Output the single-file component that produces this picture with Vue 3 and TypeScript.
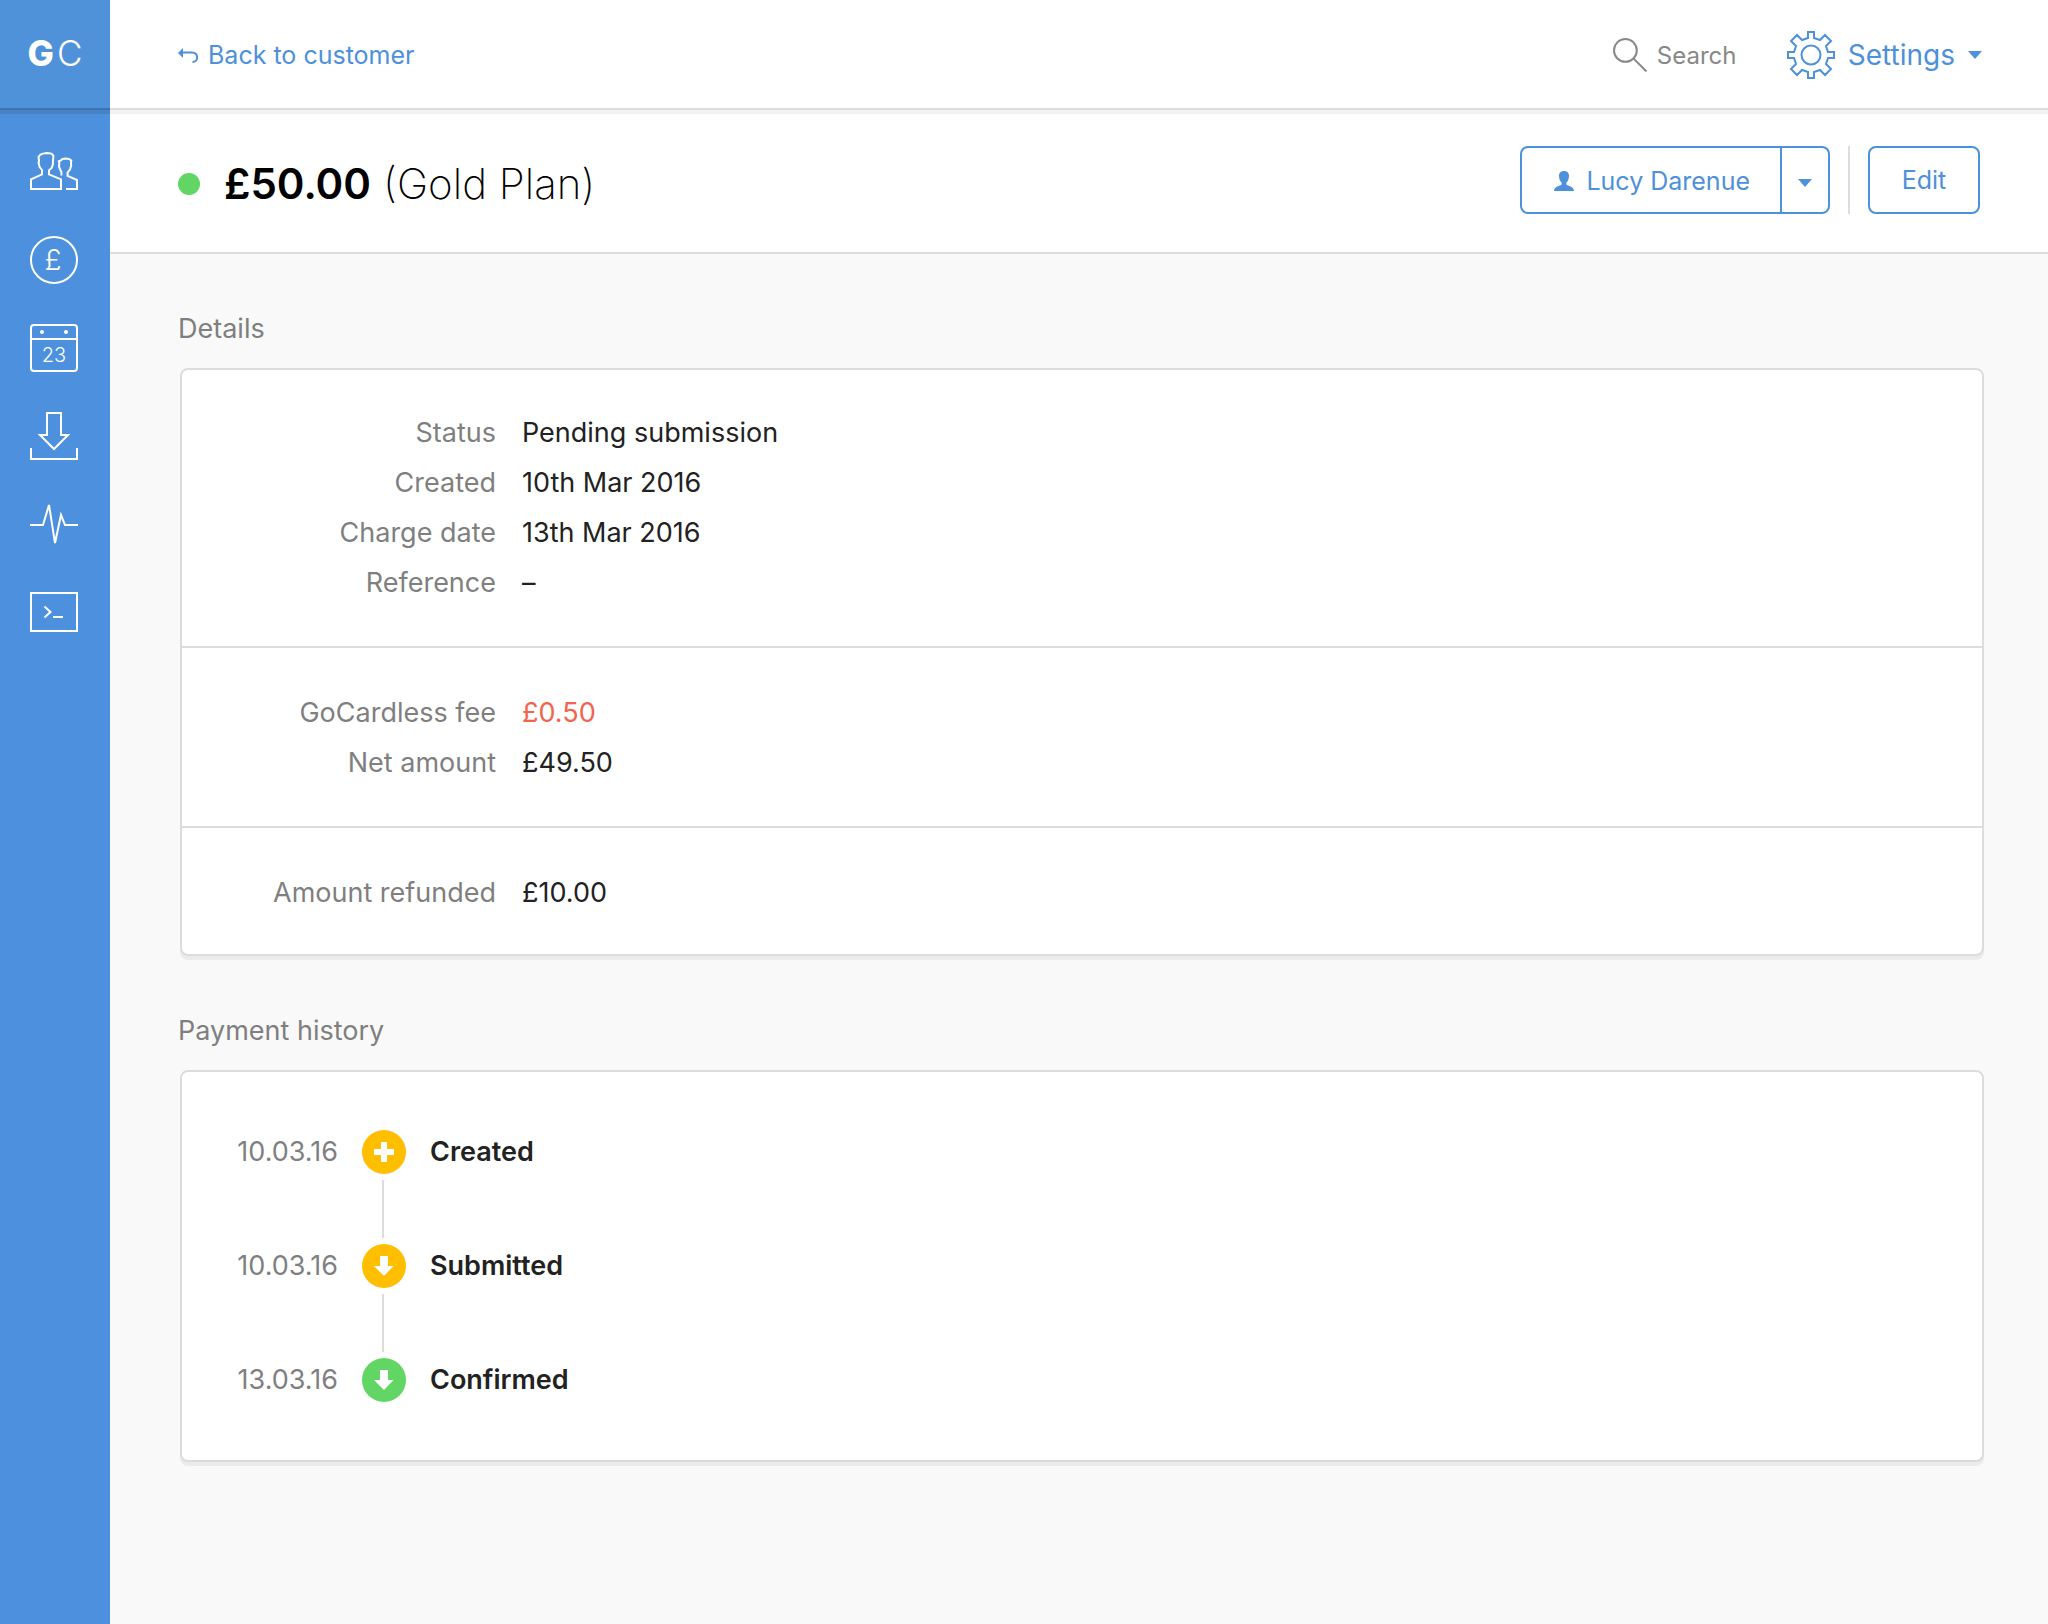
<script setup lang="ts">
interface DetailRow {
  label: string
  value: string
  negative?: boolean
}

interface HistoryEvent {
  date: string
  title: string
  icon: 'plus' | 'arrow'
  tone: 'pending' | 'success'
}

const detailGroups: DetailRow[][] = [
  [
    { label: 'Status', value: 'Pending submission' },
    { label: 'Created', value: '10th Mar 2016' },
    { label: 'Charge date', value: '13th Mar 2016' },
    { label: 'Reference', value: '–' },
  ],
  [
    { label: 'GoCardless fee', value: '£0.50', negative: true },
    { label: 'Net amount', value: '£49.50' },
  ],
  [{ label: 'Amount refunded', value: '£10.00' }],
]

const history: HistoryEvent[] = [
  { date: '10.03.16', title: 'Created', icon: 'plus', tone: 'pending' },
  { date: '10.03.16', title: 'Submitted', icon: 'arrow', tone: 'pending' },
  { date: '13.03.16', title: 'Confirmed', icon: 'arrow', tone: 'success' },
]
</script>

<template>
  <div class="shell">
    <aside class="sidebar">
      <a class="logo" href="#" aria-label="GoCardless home"><b>G</b><span>C</span></a>
      <nav class="nav" aria-label="Main">
        <a href="#" aria-label="Customers">
          <svg class="nav-icon" viewBox="0 0 48 48">
            <path d="M1 41V31.3L12 26.3V22L9.6 19L8.6 15L9 12.5L8.5 9L10.5 6.5L13 5.6L17 5L21.5 5.6L23.4 7.6L23.2 11L22.8 14L23 16L21.8 19.6L19 22.4V26.3L31 31.3V41Z" />
            <path d="M36 41H47V32L37.6 27.8V24.5L40 21.5L41.2 17.5L41 15L41.3 12.4L39 10.9L35.6 10.6L32.5 11L30.5 12.6L28.8 13.2L29.3 15.5L29 18.5L30.4 22L31.4 24V27.5" />
          </svg>
        </a>
        <a href="#" aria-label="Payments">
          <svg class="nav-icon" viewBox="0 0 48 48">
            <circle cx="24" cy="24" r="23" />
            <text class="pound" x="23" y="34">£</text>
          </svg>
        </a>
        <a href="#" aria-label="Plans">
          <svg class="nav-icon" viewBox="0 0 48 48">
            <rect x="1" y="1" width="46" height="46" rx="3" />
            <path d="M1 15H47" />
            <circle class="dot" cx="12" cy="8" r="2" />
            <circle class="dot" cx="36" cy="8" r="2" />
            <text class="day" x="24" y="38">23</text>
          </svg>
        </a>
        <a href="#" aria-label="Payouts">
          <svg class="nav-icon" viewBox="0 0 48 48">
            <path d="M17 1H31V23H38L24 37L10 23H17Z" />
            <path d="M1 36V47H47V36" />
          </svg>
        </a>
        <a href="#" aria-label="Events">
          <svg class="nav-icon" viewBox="0 0 48 48">
            <path d="M0 25H13L19 5L25 43L31 15L35 25H48" />
          </svg>
        </a>
        <a href="#" aria-label="Developers">
          <svg class="nav-icon" viewBox="0 0 48 48">
            <rect x="1" y="5" width="46" height="38" />
            <path d="M14.5 18.5L20.5 24L14.5 29.5M23 29H33" />
          </svg>
        </a>
      </nav>
    </aside>

    <div class="page">
      <header class="topbar">
        <a class="back" href="#">
          <svg width="20" height="18" viewBox="0 0 20 18">
            <path class="fill" d="M0 7L5 2V12Z" />
            <path class="line" d="M4 6.5H14C21 7 20.500 16 14.500 16" />
          </svg>
          Back to customer
        </a>
        <div class="tools">
          <label class="search">
            <svg width="34" height="34" viewBox="0 0 34 34">
              <circle cx="12.400" cy="12.400" r="11.400" />
              <path d="M20.600 20.600L33.400 33.400" />
            </svg>
            <input type="text" placeholder="Search" aria-label="Search" />
          </label>
          <button class="settings" type="button">
            <svg class="gear" width="48" height="48" viewBox="0 0 48 48">
              <path d="M21 1H27V7L33 9L38 4L44 10L39 15L41 21H47V27H41L39 33L44 38L38 44L33 39L27 41V47H21V41L15 39L10 44L4 38L9 33L7 27H1V21H7L9 15L4 10L10 4L15 9L21 7Z" />
              <circle cx="24" cy="24" r="9.500" />
            </svg>
            Settings
            <svg class="caret" width="14" height="8" viewBox="0 0 14 8"><path d="M0 0H14L7 8Z" /></svg>
          </button>
        </div>
      </header>

      <section class="titlebar">
        <h1 class="title">
          <i class="status-dot"></i>
          <b>£50.00</b>
          <span>(Gold Plan)</span>
        </h1>
        <div class="actions">
          <div class="split">
            <button class="btn customer" type="button">
              <svg width="20" height="20" viewBox="0 0 20 20">
                <path d="M10 0C13.500 0 15 2.300 15 5C15 8 13.800 10.300 12.400 11.500V13.500C13.500 15 20 15.300 20 20H0C0 15.300 6.500 15 7.600 13.500V11.500C6.200 10.300 5 8 5 5C5 2.300 6.500 0 10 0Z" />
              </svg>
              Lucy Darenue
            </button>
            <button class="btn more" type="button" aria-label="More customer actions">
              <svg class="caret" width="14" height="8" viewBox="0 0 14 8"><path d="M0 0H14L7 8Z" /></svg>
            </button>
          </div>
          <div class="separator"></div>
          <button class="btn edit" type="button">Edit</button>
        </div>
      </section>

      <main class="content">
        <section class="block">
          <h2>Details</h2>
          <div class="card">
            <dl v-for="(group, g) in detailGroups" :key="g" class="group">
              <div v-for="row in group" :key="row.label" class="row">
                <dt>{{ row.label }}</dt>
                <dd :class="{ negative: row.negative }">{{ row.value }}</dd>
              </div>
            </dl>
          </div>
        </section>

        <section class="block">
          <h2>Payment history</h2>
          <div class="card">
            <ol class="timeline">
              <li v-for="event in history" :key="event.title" class="event">
                <time>{{ event.date }}</time>
                <div class="track">
                  <svg class="marker" :class="event.tone" viewBox="0 0 44 44">
                    <circle cx="22" cy="22" r="22" />
                    <path v-if="event.icon === 'plus'" d="M19 12H25V19H32V25H25V32H19V25H12V19H19Z" />
                    <path v-else d="M18 12H26V22H31.500L22 32L12 22H18Z" />
                  </svg>
                </div>
                <strong>{{ event.title }}</strong>
              </li>
            </ol>
          </div>
        </section>
      </main>
    </div>
  </div>
</template>

<style>
body {
  margin: 0;
  background: #f9f9f9;
}
</style>

<style scoped>
.shell {
  --blue: #4d90db;
  --line: #dcdcdc;
  --muted: #7f7f7f;
  display: grid;
  grid-template-columns: 110px minmax(0, 1fr);
  min-height: 100vh;
  font-family: Inter, "Liberation Sans", sans-serif;
  font-size: 27px;
  font-weight: 400;
  color: #222;
}

button,
input {
  font: inherit;
  color: inherit;
  background: none;
  border: 0;
  padding: 0;
  margin: 0;
}

button {
  cursor: pointer;
}

a {
  color: inherit;
  text-decoration: none;
}

svg {
  display: block;
  flex: none;
}

/* Sidebar */
.sidebar {
  background: #4c90de;
  color: #fff;
  font-weight: 300;
}

.logo {
  display: flex;
  align-items: center;
  justify-content: center;
  gap: 3px;
  box-sizing: border-box;
  height: 110px;
  padding-bottom: 2px;
  background: #4f92d9;
  border-bottom: 2px solid #3f73ae;
  box-shadow: 0 4px 0 #4682c8;
  font-size: 35px;
}

.logo b {
  font-weight: 800;
}

.nav {
  display: flex;
  flex-direction: column;
  align-items: center;
  gap: 40px;
  padding: 38px 2px 0 0;
}

.nav-icon {
  width: 48px;
  height: 48px;
  fill: none;
  stroke: #fff;
  stroke-width: 2px;
}

.nav-icon text {
  fill: #fff;
  stroke: none;
  text-anchor: middle;
}

.nav-icon .dot {
  fill: #fff;
  stroke: none;
}

.pound {
  font-size: 28px;
}

.day {
  font-size: 20px;
}

/* Top bar */
.topbar {
  display: flex;
  align-items: center;
  justify-content: space-between;
  box-sizing: border-box;
  height: 110px;
  padding: 2px 66px 0 68px;
  background: #fff;
  border-bottom: 2px solid var(--line);
}

.back {
  display: flex;
  align-items: center;
  gap: 10px;
  color: var(--blue);
  font-size: 25px;
}

.back .fill {
  fill: var(--blue);
}

.back .line {
  fill: none;
  stroke: var(--blue);
  stroke-width: 2px;
}

.tools {
  display: flex;
  align-items: center;
  gap: 34px;
}

.search {
  display: flex;
  align-items: center;
  gap: 10px;
  color: #888;
  font-size: 24px;
}

.search svg {
  fill: none;
  stroke: #888;
  stroke-width: 2px;
}

.search input {
  width: 96px;
  outline: none;
}

.search input::placeholder {
  color: #888;
  opacity: 1;
}

.settings {
  display: flex;
  align-items: center;
  gap: 13px;
  color: var(--blue);
  font-size: 28px;
}

.gear {
  fill: none;
  stroke: var(--blue);
  stroke-width: 2px;
}

.caret {
  fill: var(--blue);
}

/* Title bar */
.titlebar {
  display: flex;
  align-items: flex-start;
  justify-content: space-between;
  padding: 32px 68px 30px;
  background: #fff;
  border-top: 4px solid #f2f2f2;
  border-bottom: 2px solid var(--line);
}

.title {
  display: flex;
  align-items: center;
  gap: 12px;
  margin: 0;
  color: #000;
  font-size: 42px;
  line-height: 76px;
  font-weight: 200;
}

.title b {
  font-weight: 600;
}

.status-dot {
  width: 22px;
  height: 22px;
  margin-right: 12px;
  border-radius: 50%;
  background: #61d665;
}

.actions {
  display: flex;
  gap: 18px;
  color: var(--blue);
  font-size: 25px;
}

.split {
  display: flex;
}

.btn {
  display: flex;
  align-items: center;
  justify-content: center;
  gap: 12px;
  box-sizing: border-box;
  height: 68px;
  border: 2px solid var(--blue);
  border-radius: 8px;
}

.customer {
  padding: 2px 30px 0 32px;
  border-radius: 8px 0 0 8px;
}

.customer svg {
  fill: var(--blue);
}

.more {
  width: 48px;
  padding-top: 6px;
  border-left: 0;
  border-radius: 0 8px 8px 0;
}

.separator {
  width: 2px;
  background: var(--line);
}

.edit {
  width: 112px;
}

/* Content */
.content {
  padding: 56px 64px 56px 68px;
  display: flex;
  flex-direction: column;
  gap: 56px;
}

h2 {
  margin: 0 0 20px;
  color: var(--muted);
  font-size: 27px;
  line-height: 38px;
  font-weight: 400;
}

.card {
  margin-left: 2px;
  background: #fff;
  border: 2px solid var(--line);
  border-radius: 8px;
  box-shadow: 0 4px 0 #ebebeb;
}

.group {
  margin: 0;
  padding: 40px 0 38px;
}

.group:first-child {
  padding-top: 38px;
}

.group:last-child {
  padding-bottom: 36px;
}

.group + .group {
  border-top: 2px solid var(--line);
}

.row {
  display: grid;
  grid-template-columns: 314px 1fr;
  gap: 26px;
  line-height: 50px;
}

dt {
  color: var(--muted);
  text-align: right;
}

dd {
  margin: 0;
}

dd.negative {
  color: #f2644c;
}

.timeline {
  display: flex;
  flex-direction: column;
  margin: 0;
  padding: 58px 0;
  list-style: none;
}

.event {
  display: grid;
  grid-template-columns: 156px 44px 1fr;
  gap: 24px;
  line-height: 44px;
}

.event time {
  color: var(--muted);
  text-align: right;
}

.event strong {
  font-weight: 600;
}

.marker {
  width: 44px;
  height: 44px;
  fill: #fff;
}

.marker.pending circle {
  fill: #ffbf00;
}

.marker.success circle {
  fill: #61d665;
}

/* Connector drawn under every marker but the last */
.event:not(:last-child) .track::after {
  content: "";
  display: block;
  width: 2px;
  height: 58px;
  margin: 6px 20px;
  background: var(--line);
}
</style>
